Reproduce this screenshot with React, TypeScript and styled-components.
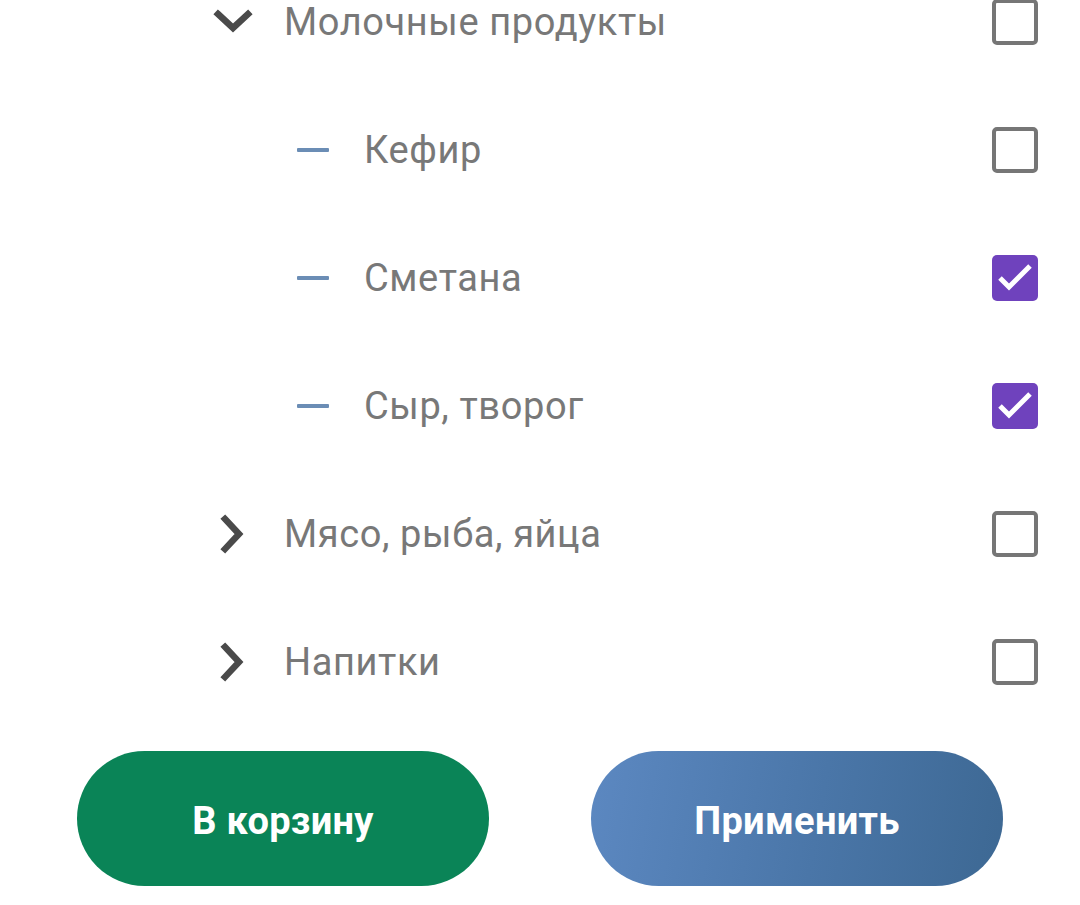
import React, { useState } from 'react';
import styled, { createGlobalStyle } from 'styled-components';

const GlobalStyle = createGlobalStyle`
    html, body {
        margin: 0;
        padding: 0;
        background: #ffffff;
        font-family: Roboto, 'Noto Sans', sans-serif;
        overflow: hidden;
    }
`;

const Page = styled.div`
    width: 1080px;
    height: 905px;
    overflow: hidden;
    display: flex;
    flex-direction: column;
`;

const List = styled.div`
    display: flex;
    flex-direction: column;
    margin-top: -42px;
    padding: 0 42px 0 212px;
`;

const Row = styled.div<{ level: number }>`
    display: flex;
    align-items: center;
    height: 128px;
    padding-left: ${(p) => p.level * 80}px;
`;

const IconSlot = styled.div`
    width: 72px;
    flex: none;
    display: flex;
    align-items: center;
`;

const Dash = styled.span`
    display: block;
    width: 32px;
    height: 4px;
    margin-left: 5px;
    border-radius: 1px;
    background: #6b8db5;
`;

const Label = styled.span`
    flex: 1;
    font-size: 38px;
    color: #787878;
    letter-spacing: 0.6px;
`;

const Box = styled.button<{ checked: boolean }>`
    width: 46px;
    height: 46px;
    flex: none;
    padding: 0;
    box-sizing: border-box;
    border-radius: 5px;
    border: ${(p) => (p.checked ? 'none' : '4.5px solid #767676')};
    background: ${(p) => (p.checked ? '#6f42bd' : '#ffffff')};
    display: flex;
    align-items: center;
    justify-content: center;
    cursor: pointer;
`;

const Buttons = styled.div`
    display: flex;
    justify-content: space-between;
    padding: 0 77px;
    margin-top: 25px;
`;

const Pill = styled.button<{ variant: 'green' | 'blue' }>`
    width: 412px;
    height: 135px;
    border: none;
    border-radius: 68px;
    padding: 4px 0 0;
    background: ${(p) =>
        p.variant === 'green' ? '#0a8457' : 'linear-gradient(100deg, #5c88c1 0%, #4a76a8 55%, #3d6893 100%)'};
    color: #ffffff;
    font-family: Roboto, 'Noto Sans', sans-serif;
    font-weight: 700;
    font-size: 38px;
    letter-spacing: 0.3px;
    cursor: pointer;
`;

const ChevronDown = () => (
    <svg width="42" height="26" viewBox="0 0 42 26">
        <path d="M6 5 L21 19 L36 5" fill="none" stroke="#4a4a4a" strokeWidth="6.5" strokeLinecap="square" />
    </svg>
);

const ChevronRight = () => (
    <svg width="40" height="40" viewBox="0 0 40 40" style={{ marginLeft: 5 }}>
        <path d="M8 5 L22 20 L8 35" fill="none" stroke="#4a4a4a" strokeWidth="6.5" strokeLinecap="square" />
    </svg>
);

const Check = () => (
    <svg width="46" height="46" viewBox="0 0 46 46">
        <path d="M8 23 L17 32 L38 11" fill="none" stroke="#ffffff" strokeWidth="5" />
    </svg>
);

type Item = { id: string; label: string; level: number; icon: 'down' | 'right' | 'dash' };

const items: Item[] = [
    { id: 'dairy', label: 'Молочные продукты', level: 0, icon: 'down' },
    { id: 'kefir', label: 'Кефир', level: 1, icon: 'dash' },
    { id: 'smetana', label: 'Сметана', level: 1, icon: 'dash' },
    { id: 'cheese', label: 'Сыр, творог', level: 1, icon: 'dash' },
    { id: 'meat', label: 'Мясо, рыба, яйца', level: 0, icon: 'right' },
    { id: 'drinks', label: 'Напитки', level: 0, icon: 'right' },
];

export default function App() {
    const [checked, setChecked] = useState<Record<string, boolean>>({ smetana: true, cheese: true });

    const toggle = (id: string) => {
        setChecked((c) => ({ ...c, [id]: !c[id] }));
    };

    return (
        <Page>
            <GlobalStyle />
            <List>
                {items.map((item) => (
                    <Row key={item.id} level={item.level}>
                        <IconSlot>
                            {item.icon === 'down' && <ChevronDown />}
                            {item.icon === 'right' && <ChevronRight />}
                            {item.icon === 'dash' && <Dash />}
                        </IconSlot>
                        <Label>{item.label}</Label>
                        <Box type="button" checked={!!checked[item.id]} onClick={() => toggle(item.id)}>
                            {checked[item.id] && <Check />}
                        </Box>
                    </Row>
                ))}
            </List>
            <Buttons>
                <Pill variant="green">В корзину</Pill>
                <Pill variant="blue">Применить</Pill>
            </Buttons>
        </Page>
    );
}
